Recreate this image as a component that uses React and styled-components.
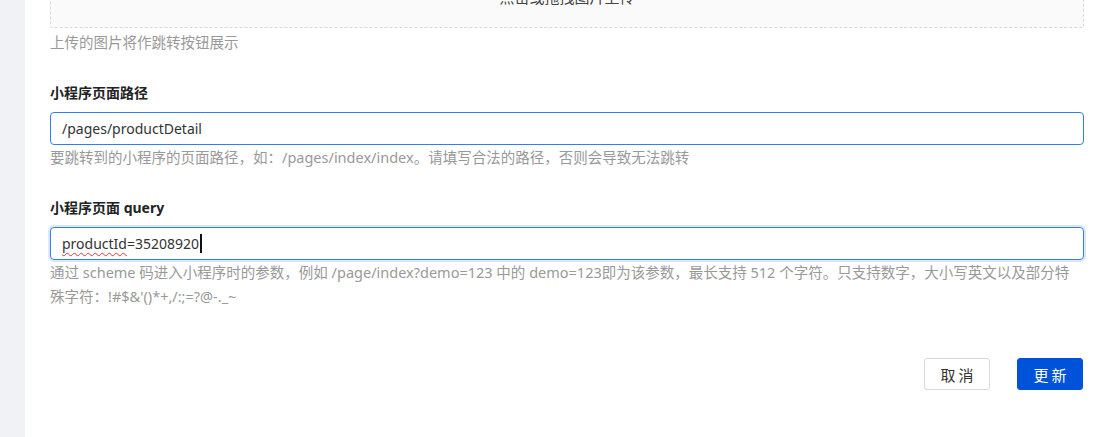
import React from 'react';
import styled, { createGlobalStyle } from 'styled-components';

const GlobalStyle = createGlobalStyle`
  html, body {
    margin: 0;
    padding: 0;
    background: #ffffff;
    overflow: hidden;
  }
  body {
    font-family: "Noto Sans", "Noto Sans CJK SC", sans-serif;
    font-size: 14px;
    color: #333333;
  }
`;

const Layout = styled.div`
  display: flex;
  height: 437px;
  overflow: hidden;
`;

const Sidebar = styled.div`
  width: 25px;
  flex-shrink: 0;
  background: #f0f2f5;
`;

const Main = styled.main`
  flex: 1;
  background: #ffffff;
  padding: 0 22px 0 25px;
`;

// the page is scrolled a little, so the upload box is cut at the top
const Scrolled = styled.div`
  margin-top: -70px;
`;

const Field = styled.section`
  display: flex;
  flex-direction: column;
  margin-bottom: ${(p) => p.$gap || 0}px;
`;

const UploadBox = styled.div`
  height: 98px;
  border: 1px dashed #d9d9d9;
  border-radius: 2px;
  background: #fafafa;
  display: flex;
  align-items: flex-end;
  justify-content: center;
  padding-bottom: 19px;
  box-sizing: border-box;
  color: #444444;
  font-size: 15px;
  line-height: 22px;
`;

const Label = styled.label`
  font-weight: 700;
  color: #222222;
  line-height: 22px;
  margin-bottom: 8px;
`;

const Input = styled.div`
  height: 33px;
  box-sizing: border-box;
  border: 1px solid #2f7ff0;
  border-radius: 4px;
  padding: 0 11px;
  display: flex;
  align-items: center;
  color: #333333;
  font-size: 14px;
  box-shadow: ${(p) => (p.$focused ? '0 0 0 2px rgba(47, 127, 240, 0.18)' : 'none')};
`;

const Misspelled = styled.span`
  text-decoration: underline wavy #e53935;
  text-decoration-thickness: 1px;
  text-underline-offset: 3px;
`;

const Caret = styled.span`
  display: inline-block;
  width: 1.5px;
  height: 19px;
  background: #111111;
  margin-left: 1px;
`;

const Help = styled.div`
  color: #999999;
  font-size: 14.5px;
  line-height: 24px;
  margin-top: ${(p) => p.$top || 0}px;
`;

const Footer = styled.div`
  display: flex;
  justify-content: flex-end;
  gap: 27px;
  margin-top: 50px;
  padding-right: 1px;
`;

const Button = styled.button`
  width: 66px;
  height: 32px;
  border-radius: 3px;
  font-family: inherit;
  font-size: 15px;
  letter-spacing: 3px;
  text-indent: 3px;
  cursor: pointer;
  border: 1px solid ${(p) => (p.$primary ? '#0052d9' : '#d9d9d9')};
  background: ${(p) => (p.$primary ? '#0052d9' : '#ffffff')};
  color: ${(p) => (p.$primary ? '#ffffff' : '#333333')};
`;

export default function App() {
  return (
    <>
      <GlobalStyle />
      <Layout>
        <Sidebar />
        <Main>
          <Scrolled>
            <Field $gap={28}>
              <UploadBox>点击或拖拽图片上传</UploadBox>
              <Help $top={2}>上传的图片将作跳转按钮展示</Help>
            </Field>

            <Field $gap={28}>
              <Label>小程序页面路径</Label>
              <Input>/pages/productDetail</Input>
              <Help>要跳转到的小程序的页面路径，如：/pages/index/index。请填写合法的路径，否则会导致无法跳转</Help>
            </Field>

            <Field>
              <Label>小程序页面 query</Label>
              <Input $focused>
                <Misspelled>productId</Misspelled>=35208920<Caret />
              </Input>
              <Help>
                通过 scheme 码进入小程序时的参数，例如 /page/index?demo=123 中的 demo=123即为该参数，最长支持 512 个字符。只支持数字，大小写英文以及部分特<br />
                殊字符：!#$&amp;'()*+,/:;=?@-._~
              </Help>
            </Field>

            <Footer>
              <Button>取消</Button>
              <Button $primary>更新</Button>
            </Footer>
          </Scrolled>
        </Main>
      </Layout>
    </>
  );
}
